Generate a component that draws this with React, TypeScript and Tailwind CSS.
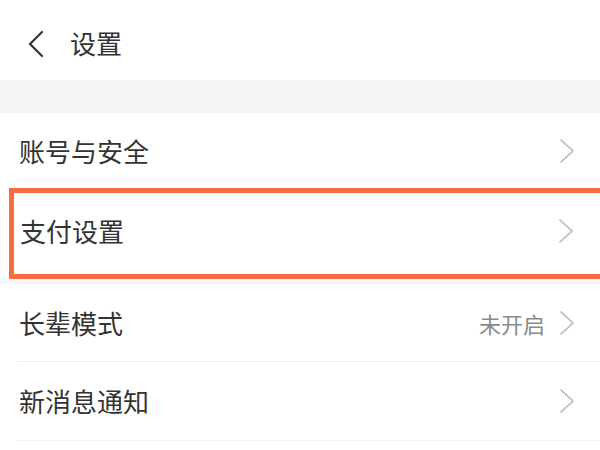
import React from "react";

const font = { fontFamily: '"Noto Sans CJK SC", "Noto Sans", sans-serif' };

function Chevron() {
  return (
    <svg width="16" height="24" viewBox="0 0 16 24" className="shrink-0">
      <path d="M2 1 L14 12 L2 23" fill="none" stroke="#c4c4c4" strokeWidth="1.7" strokeLinecap="round" strokeLinejoin="round" />
    </svg>
  );
}

function Row({ label, value, h }: { label: string; value?: string; h: string }) {
  return (
    <div className={`flex items-center justify-between pl-[19px] pr-[25px] ${h}`}>
      <span className="text-[26px] leading-none text-[#333333]">{label}</span>
      <div className="flex items-center gap-[14px]">
        {value && <span className="text-[22px] leading-none text-[#8a8a8a]">{value}</span>}
        <Chevron />
      </div>
    </div>
  );
}

export default function App() {
  return (
    <div className="w-[600px] h-[450px] overflow-hidden bg-white" style={font}>
      <div className="h-[80px] flex items-center pl-[27px]">
        <svg width="18" height="28" viewBox="0 0 18 28" className="mt-[8px]">
          <path d="M15 2 L3 14 L15 26" fill="none" stroke="#333" strokeWidth="2.2" strokeLinecap="round" strokeLinejoin="round" />
        </svg>
        <span className="ml-[25px] mt-[5px] text-[26px] leading-none text-[#333333]">设置</span>
      </div>
      <div className="h-[33px] bg-[#f5f5f5]" />
      <Row label="账号与安全" h="h-[75px]" />
      <div className="ml-[9px] -mr-[20px] border-[5px] border-[#f96c3d]">
        <div className="h-[81px] flex items-center justify-between pl-[6px] pr-[41px] pb-[6px]">
          <span className="text-[26px] leading-none text-[#333333]">支付设置</span>
          <Chevron />
        </div>
      </div>
      <div className="h-[5px] bg-[#f7f7f7]" />
      <Row label="长辈模式" value="未开启" h="h-[77px]" />
      <div className="ml-[18px] h-px bg-[#f0f0f0]" />
      <Row label="新消息通知" h="h-[78px]" />
      <div className="ml-[18px] h-px bg-[#f0f0f0]" />
    </div>
  );
}
